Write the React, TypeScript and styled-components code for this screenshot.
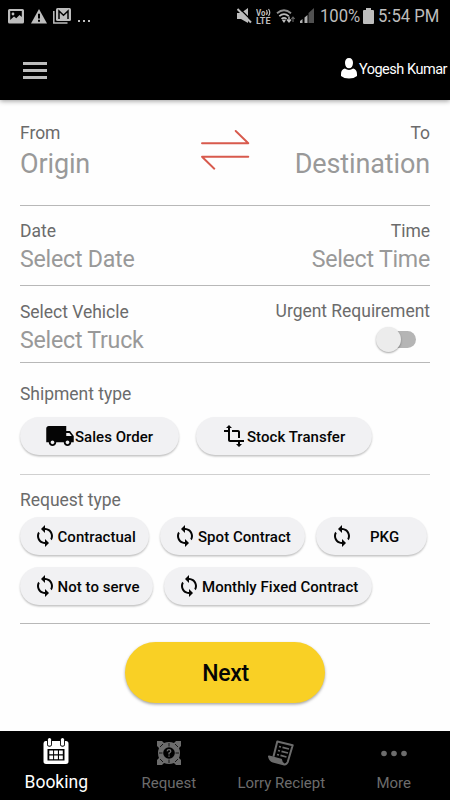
import React from "react";
import styled, { createGlobalStyle } from "styled-components";
import { MdLocalShipping, MdTransform, MdSync } from "react-icons/md";

const GlobalStyle = createGlobalStyle`
  * { box-sizing: border-box; }
  body { margin: 0; background: #fff; font-family: Roboto, sans-serif; }
  svg { display: block; flex: none; }
`;

const Screen = styled.div`
  width: 450px;
  height: 800px;
  display: flex;
  flex-direction: column;
  background: #fefefe;
  overflow: hidden;
`;

const Header = styled.header`
  height: 100px;
  flex: none;
  background: #000;
  box-shadow: 0 1px 5px rgba(0, 0, 0, 0.4);
`;

const StatusBar = styled.div`
  height: 32px;
  display: flex;
  justify-content: space-between;
  padding: 0 11px 0 8px;
  color: #bdbdbd;
`;

const StatusGroup = styled.div<{ $gap: number }>`
  display: flex;
  align-items: center;
  gap: ${(p) => p.$gap}px;
`;

const StatusText = styled.span<{ $w: number }>`
  width: ${(p) => p.$w}px;
  font-size: 18.5px;
  line-height: 24px;
  white-space: nowrap;
  transform: scaleX(0.9);
  transform-origin: left;
`;

const Label = styled.span<{
  $size: number;
  $color: string;
  $line: number;
  $weight?: number;
  $track?: number;
  $drop?: number;
}>`
  display: block;
  white-space: nowrap;
  font-size: ${(p) => p.$size}px;
  line-height: ${(p) => p.$line}px;
  color: ${(p) => p.$color};
  font-weight: ${(p) => p.$weight ?? 400};
  letter-spacing: ${(p) => p.$track ?? 0}px;
  padding-top: ${(p) => p.$drop ?? 0}px;
`;

const AppBar = styled.div`
  height: 68px;
  display: flex;
  align-items: center;
  justify-content: space-between;
  padding: 5px 3px 0 23px;
`;

const MenuButton = styled.button`
  width: 24px;
  height: 17px;
  padding: 0;
  margin-top: 4px;
  border: 0;
  background: none;
  display: flex;
  flex-direction: column;
  justify-content: space-between;
`;

const MenuBar = styled.i`
  height: 3px;
  width: 24px;
  background: #bcbcbc;
`;

const User = styled.div`
  display: flex;
  align-items: center;
  gap: 2px;
`;

const Form = styled.main`
  flex: 1;
  padding: 0 20px;
`;

const Section = styled.section<{ $h: number; $top: number; $line?: string }>`
  height: ${(p) => p.$h}px;
  padding-top: ${(p) => p.$top}px;
  border-bottom: 1px solid ${(p) => p.$line ?? "#b8b8b8"};
`;

const FieldRow = styled.div`
  display: flex;
  justify-content: space-between;
  align-items: flex-start;
`;

const Field = styled.div<{ $end?: boolean; $raise?: number }>`
  flex: 1;
  display: flex;
  flex-direction: column;
  align-items: ${(p) => (p.$end ? "flex-end" : "flex-start")};
  margin-top: ${(p) => -(p.$raise ?? 0)}px;
`;

const SwapButton = styled.button`
  width: 50px;
  height: 40px;
  margin-top: 8px;
  padding: 0;
  border: 0;
  background: none;
`;

const Switch = styled.div`
  width: 41px;
  height: 26px;
  margin: 4px 13px 0 0;
  display: flex;
  align-items: center;
`;

const SwitchThumb = styled.span`
  width: 25px;
  height: 25px;
  border-radius: 50%;
  background: #ececec;
  box-shadow: 0 1px 2px rgba(0, 0, 0, 0.35);
  z-index: 1;
`;

const SwitchTrack = styled.span`
  width: 29px;
  height: 17px;
  margin-left: -14px;
  border-radius: 9px;
  background: #b5b5b5;
`;

const ChipRow = styled.div<{ $top: number; $gap: number }>`
  display: flex;
  gap: ${(p) => p.$gap}px;
  margin-top: ${(p) => p.$top}px;
`;

const Chip = styled.button<{ $w: number; $pad: number; $gap?: number }>`
  width: ${(p) => p.$w}px;
  height: 38px;
  flex: none;
  display: flex;
  align-items: center;
  gap: ${(p) => p.$gap ?? 0}px;
  padding: 0 0 0 ${(p) => p.$pad}px;
  border: 0;
  border-radius: 19px;
  background: #f1f1f3;
  color: #050505;
  font-family: inherit;
  box-shadow: 0 1.5px 2px rgba(0, 0, 0, 0.24);
`;

const NextButton = styled.button`
  width: 200px;
  height: 61px;
  margin: 18px auto 0;
  padding: 2px 0 0 1px;
  display: block;
  border: 0;
  border-radius: 31px;
  background: #f9d025;
  font-family: inherit;
  box-shadow: 0 1.5px 3px rgba(0, 0, 0, 0.35);
`;

const NavBar = styled.nav`
  height: 69px;
  flex: none;
  background: #000;
  display: grid;
  grid-template-columns: repeat(4, 1fr);
`;

const NavItem = styled.a<{ $active?: boolean }>`
  color: ${(p) => (p.$active ? "#fff" : "#6c6c6c")};
  display: flex;
  flex-direction: column;
  align-items: center;
`;

const NavIcon = styled.span<{ $top: number; $h?: number }>`
  height: ${(p) => p.$h ?? 41}px;
  padding-top: ${(p) => p.$top}px;
`;

const GREY = "#6b6b6b";
const HINT = "#999";

const PictureIcon = () => (
  <svg width="16" height="15" viewBox="0 0 16 15">
    <path
      fill="currentColor"
      fillRule="evenodd"
      d="M1.5 0H14.5Q16 0 16 1.5V13Q16 14.5 14.5 14.5H1.5Q0 14.5 0 13V1.5Q0 0 1.5 0ZM2.2 2V11L6 7.5L8.3 9.3L11.5 6L13.8 8V2Z"
    />
    <circle cx="5" cy="5" r="1.4" fill="currentColor" />
  </svg>
);

const AlertIcon = () => (
  <svg width="16" height="15" viewBox="0 0 16 15">
    <path d="M8 0L16 14.5H0Z" fill="currentColor" />
    <path d="M8 4.8V9.6M8 10.8V12.8" stroke="#000" strokeWidth="2" />
  </svg>
);

const MailStackIcon = () => (
  <svg width="18" height="16" viewBox="0 0 18 16">
    <path d="M.8 3V15H14.5" fill="none" stroke="currentColor" strokeWidth="1.5" />
    <rect x="3" width="15" height="13" rx="1.5" fill="currentColor" />
    <path d="M6 11V3L10.5 7.2L15 3V11" fill="none" stroke="#000" strokeWidth="1.5" />
  </svg>
);

const EllipsisIcon = () => (
  <svg width="14" height="16" viewBox="0 0 14 16">
    <path d="M0 12h2v2H0zM5 12h2v2H5zM10 12h2v2h-2z" fill="currentColor" />
  </svg>
);

const MuteIcon = () => (
  <svg width="15" height="16" viewBox="0 0 15 16">
    <path d="M0 5H4L11 0V15L4 11H0Z" fill="currentColor" />
    <path d="M1.5 -.5L15 13" stroke="#000" strokeWidth="1.4" />
    <path d="M.5 1L14 14.5" stroke="currentColor" strokeWidth="2" />
  </svg>
);

const VolteIcon = () => (
  <svg width="16" height="17" viewBox="0 0 16 17">
    <g fill="currentColor" fontFamily="Roboto, sans-serif" fontWeight="700">
      <text x="0" y="7.5" fontSize="8.5" textLength="9.5" lengthAdjust="spacingAndGlyphs">Vo</text>
      <text x="0" y="16" fontSize="9" textLength="14.5" lengthAdjust="spacingAndGlyphs">LTE</text>
    </g>
    <path d="M10.5 2Q12 4.5 10.5 7M12.5 1Q15 4.5 12.5 8" fill="none" stroke="currentColor" strokeWidth="1.2" />
  </svg>
);

const WifiIcon = () => (
  <svg width="20" height="17" viewBox="0 0 20 17">
    <g fill="none" stroke="currentColor" strokeWidth="1.8">
      <path d="M1 5.2Q8 -.8 15 5.2" opacity=".75" />
      <path d="M3.3 8.2Q8 4 12.7 8.2M5.6 11Q8 8.8 10.5 11" />
    </g>
    <path d="M6 12.2Q8 10.8 9.8 12.2L8 15Z" fill="currentColor" />
    <path d="M13 8.5V14M11 11.5L13 14L15 11.5" stroke="currentColor" strokeWidth="1.4" fill="none" />
    <path d="M17 14V9M15.3 11L17 9L18.7 11" stroke="#666" strokeWidth="1.1" fill="none" />
  </svg>
);

const SignalIcon = () => (
  <svg width="16" height="16" viewBox="0 0 16 16">
    <path d="M0 15V13L2.5 11V15ZM4.5 15V9.5L7.5 7V15Z" fill="#b0b0b0" />
    <path d="M8.5 15V5L14 0V15Z" fill="#505050" />
  </svg>
);

const BatteryIcon = () => (
  <svg width="11" height="16" viewBox="0 0 11 16">
    <path d="M3 0H8V2H10Q11 2 11 3V15Q11 16 10 16H1Q0 16 0 15V3Q0 2 1 2H3Z" fill="currentColor" />
  </svg>
);

const PersonIcon = () => (
  <svg width="16" height="21" viewBox="0 0 16 21">
    <path
      fill="#fff"
      d="M8 0C10.7 0 12.1 2 12 5C11.9 8.3 10.2 10.3 8 10.3S4.1 8.3 4 5C3.9 2 5.3 0 8 0ZM3.8 10.6Q8 13.4 12.2 10.6C14.8 11.2 16 13.2 16 16.2V18Q13 20.5 8 20.5T0 18V16.2C0 13.2 1.2 11.2 3.8 10.6Z"
    />
  </svg>
);

const SwapIcon = () => (
  <svg
    width="50"
    height="40"
    viewBox="0 0 50 40"
    fill="none"
    stroke="#d85a4d"
    strokeWidth="1.9"
    strokeLinejoin="round"
    strokeLinecap="round"
  >
    <path d="M2 13.2H48.3L35.7 1" />
    <path d="M48.3 26.7H2L14.3 38.7" />
  </svg>
);

const CalendarIcon = () => (
  <svg width="26" height="27" viewBox="0 0 26 27">
    <path
      fill="currentColor"
      fillRule="evenodd"
      d="M2.5 3H4V6Q4 8.7 6.5 8.7T9 6V3H17V6Q17 8.7 19.5 8.7T22 6V3H23Q25.5 3 25.5 5.5V23.5Q25.5 26 23 26H3Q.5 26 .5 23.5V5.5Q.5 3 2.5 3ZM4.5 11V22.5H21.5V11Z"
    />
    <rect x="4.9" y="0" width="3.2" height="7.8" rx="1.6" fill="currentColor" />
    <rect x="17.9" y="0" width="3.2" height="7.8" rx="1.6" fill="currentColor" />
    <path
      fill="currentColor"
      d="M6.3 12.5h3.8v3.8H6.3zM11.1 12.5h3.8v3.8h-3.8zM16 12.5h3.8v3.8H16zM6.3 17.5h3.8v3.8H6.3zM11.1 17.5h3.8v3.8h-3.8zM16 17.5h3.8v3.8H16z"
    />
  </svg>
);

const LifebuoyIcon = () => (
  <svg width="24" height="24" viewBox="0 0 24 24">
    <path
      fill="currentColor"
      d="M0 0H5L7 2Q12 0 17 2L19 0H24V5L22 7Q24 12 22 17L24 19V24H19L17 22Q12 24 7 22L5 24H0V19L2 17Q0 12 2 7L0 5Z"
    />
    <circle cx="12" cy="12" r="5.8" fill="#000" />
    <path
      d="M3 6L6 3M21 6L18 3M3 18L6 21M21 18L18 21M12 2V5.5M12 18.5V22M2 12H5.5M18.5 12H22"
      stroke="#000"
      strokeWidth=".8"
    />
    <path d="M10.2 10.3Q10.2 8.7 12 8.7T13.8 10.3Q13.8 11.3 12 12.2V13.4M12 14.5V15.8" fill="none" stroke="currentColor" strokeWidth="1.3" />
  </svg>
);

const ReceiptIcon = () => (
  <svg width="26" height="26" viewBox="0 0 26 26" fill="none" stroke="currentColor" strokeLinejoin="round">
    <path strokeWidth="2" d="M5.5 16.5L9.3 1.5L24.7 5.3L19.7 22Q18.5 25 15.5 24.3L5 21.5Q2 20.5 1 16.5L13 19.7Q13.5 23.5 16 24.3" />
    <path strokeWidth="1.8" d="M11 6.5L13 7M14.5 7.4L21 9M10 10.5L12 11M13.5 11.4L20 13M9 14.5L11 15M12.5 15.4L18.5 17" />
    <path fill="currentColor" stroke="none" d="M1 16.5L13 19.7L15 24L5 21.5Q2 20.5 1 16.5Z" />
  </svg>
);

const DotsIcon = () => (
  <svg width="26" height="25" viewBox="0 0 26 25" fill="currentColor">
    <circle cx="3" cy="12.5" r="2.8" />
    <circle cx="13" cy="12.5" r="2.8" />
    <circle cx="23" cy="12.5" r="2.8" />
  </svg>
);

const ChipText = ({ children }: { children: string }) => (
  <Label $size={15} $line={20} $color="#050505" $weight={500} $track={0.04} $drop={2}>
    {children}
  </Label>
);

const Caption = ({ children }: { children: string }) => (
  <Label $size={17.5} $line={22} $color={GREY} $track={-0.03}>
    {children}
  </Label>
);

const Hint = ({ children }: { children: string }) => (
  <Label $size={23.2} $line={30} $color={HINT} $track={-0.25} $drop={2}>
    {children}
  </Label>
);

const Place = ({ children }: { children: string }) => (
  <Label $size={27} $line={38} $color={HINT} $track={-0.13} $drop={1}>
    {children}
  </Label>
);

export default function App() {
  return (
    <Screen>
      <GlobalStyle />
      <Header>
        <StatusBar>
          <StatusGroup $gap={6.5}>
            <PictureIcon />
            <AlertIcon />
            <MailStackIcon />
            <EllipsisIcon />
          </StatusGroup>
          <StatusGroup $gap={4}>
            <MuteIcon />
            <VolteIcon />
            <WifiIcon />
            <SignalIcon />
            <StatusText $w={39}>100%</StatusText>
            <BatteryIcon />
            <StatusText $w={61}>5:54 PM</StatusText>
          </StatusGroup>
        </StatusBar>
        <AppBar>
          <MenuButton aria-label="Menu">
            <MenuBar />
            <MenuBar />
            <MenuBar />
          </MenuButton>
          <User>
            <PersonIcon />
            <Label $size={14.5} $line={20} $color="#fff" $track={-0.48} $drop={3}>
              Yogesh Kumar
            </Label>
          </User>
        </AppBar>
      </Header>

      <Form>
        <Section $h={106} $top={22}>
          <FieldRow>
            <Field>
              <Caption>From</Caption>
              <Place>Origin</Place>
            </Field>
            <SwapButton aria-label="Swap">
              <SwapIcon />
            </SwapButton>
            <Field $end>
              <Caption>To</Caption>
              <Place>Destination</Place>
            </Field>
          </FieldRow>
        </Section>

        <Section $h={80} $top={14}>
          <FieldRow>
            <Field>
              <Caption>Date</Caption>
              <Hint>Select Date</Hint>
            </Field>
            <Field $end>
              <Caption>Time</Caption>
              <Hint>Select Time</Hint>
            </Field>
          </FieldRow>
        </Section>

        <Section $h={77} $top={15}>
          <FieldRow>
            <Field>
              <Caption>Select Vehicle</Caption>
              <Hint>Select Truck</Hint>
            </Field>
            <Field $end $raise={1}>
              <Caption>Urgent Requirement</Caption>
              <Switch role="switch" aria-checked="false">
                <SwitchThumb />
                <SwitchTrack />
              </Switch>
            </Field>
          </FieldRow>
        </Section>

        <Section $h={112} $top={20} $line="#d0d0d0">
          <Caption>Shipment type</Caption>
          <ChipRow $top={12} $gap={17}>
            <Chip $w={159} $pad={25}>
              <MdLocalShipping size={30} />
              <ChipText>Sales Order</ChipText>
            </Chip>
            <Chip $w={176} $pad={26} $gap={1}>
              <MdTransform size={24} />
              <ChipText>Stock Transfer</ChipText>
            </Chip>
          </ChipRow>
        </Section>

        <Section $h={149} $top={14}>
          <Caption>Request type</Caption>
          <ChipRow $top={6} $gap={11}>
            <Chip $w={129} $pad={13} $gap={0.5}>
              <MdSync size={24} />
              <ChipText>Contractual</ChipText>
            </Chip>
            <Chip $w={145} $pad={13} $gap={1}>
              <MdSync size={24} />
              <ChipText>Spot Contract</ChipText>
            </Chip>
            <Chip $w={111} $pad={14} $gap={16}>
              <MdSync size={24} />
              <ChipText>PKG</ChipText>
            </Chip>
          </ChipRow>
          <ChipRow $top={12} $gap={11}>
            <Chip $w={133} $pad={13} $gap={0.5}>
              <MdSync size={24} />
              <ChipText>Not to serve</ChipText>
            </Chip>
            <Chip $w={208} $pad={13} $gap={1}>
              <MdSync size={24} />
              <ChipText>Monthly Fixed Contract</ChipText>
            </Chip>
          </ChipRow>
        </Section>

        <NextButton>
          <Label $size={23} $line={30} $color="#050505" $weight={500} $track={-0.3}>
            Next
          </Label>
        </NextButton>
      </Form>

      <NavBar>
        <NavItem $active>
          <NavIcon $top={7} $h={40}><CalendarIcon /></NavIcon>
          <Label $size={17.5} $line={22} $color="#fff">Booking</Label>
        </NavItem>
        <NavItem>
          <NavIcon $top={10}><LifebuoyIcon /></NavIcon>
          <Label $size={15} $line={22} $color="#6c6c6c">Request</Label>
        </NavItem>
        <NavItem>
          <NavIcon $top={9}><ReceiptIcon /></NavIcon>
          <Label $size={15} $line={22} $color="#6c6c6c">Lorry Reciept</Label>
        </NavItem>
        <NavItem>
          <NavIcon $top={10}><DotsIcon /></NavIcon>
          <Label $size={15} $line={22} $color="#6c6c6c">More</Label>
        </NavItem>
      </NavBar>
    </Screen>
  );
}
